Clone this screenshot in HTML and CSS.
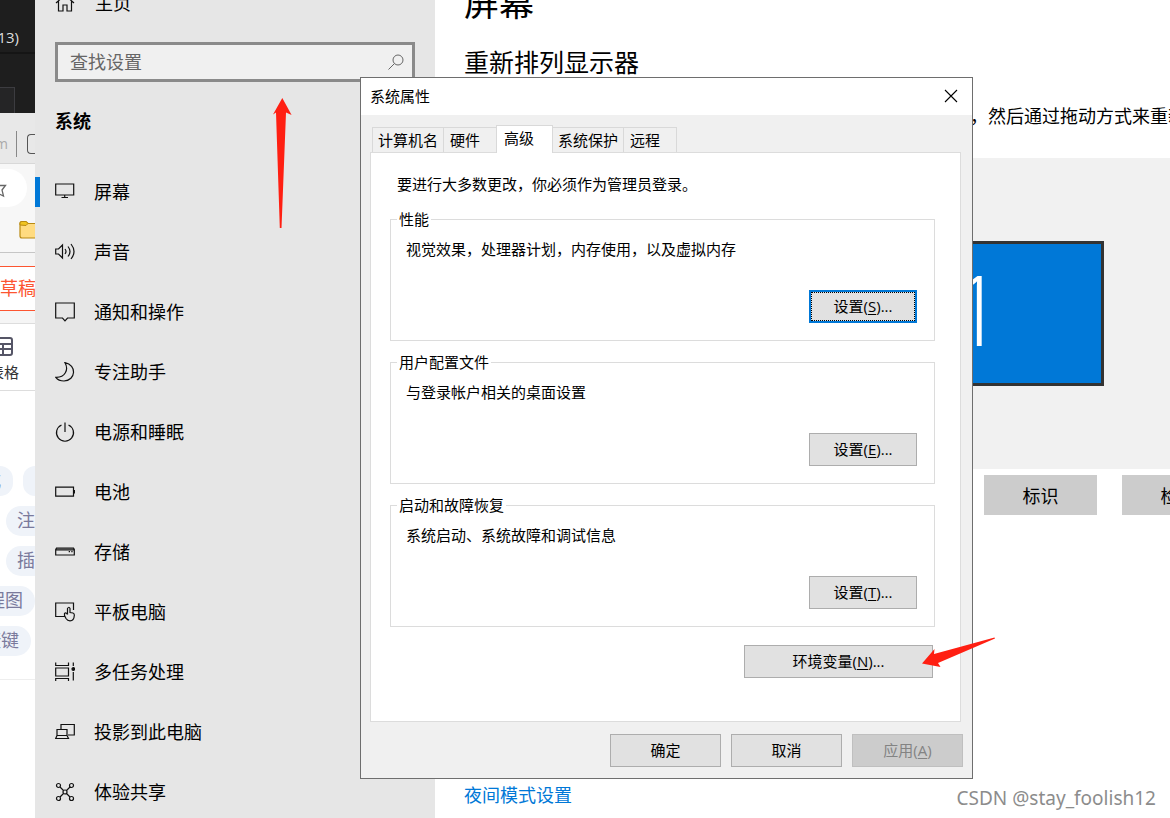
FILE: index.html
```html
<!DOCTYPE html>
<html lang="zh-CN">
<head>
<meta charset="utf-8">
<title>系统设置</title>
<link rel="stylesheet" href="styles.css">
</head>
<body>
<div class="desktop">
  <aside class="behind">
    <div class="behind-dark"><span class="behind-count">13)</span><div class="behind-tab"></div></div>
    <div class="behind-tabs"><span class="behind-url">m</span><span class="behind-rule"></span><span class="behind-page"></span></div>
    <div class="behind-toolbar">
      <div class="behind-address"><svg width="8" height="18" viewBox="0 0 8 18" fill="none" stroke="#666" stroke-width="1.3"><path d="M-2 3.500H5.500L2 8L3.500 14L-3 11"/></svg></div>
      <svg class="behind-folder" width="18" height="20" viewBox="0 0 18 20"><path d="M1 3Q1 1.500 3 1.500H7L9 3.500H20V18H3Q1 18 1 16Z" fill="#ffdb80" stroke="#b98a12" stroke-width="1.200"/><path d="M1 5V3Q1 1.500 3 1.500H7L9 3.500L7 5.500Z" fill="#f0c420" stroke="#b98a12"/></svg>
    </div>
    <div class="behind-draft"><span class="draft-label">草稿</span></div>
    <div class="behind-table"><svg width="14" height="20" viewBox="0 0 14 20" fill="none" stroke="#555566" stroke-width="2"><path d="M-4 1H10Q12 1 12 3V16Q12 18 10 18H-4M-2 7H12M-2 12H12M3 7V18"/></svg><span class="table-label">表格</span></div>
    <div class="behind-chips">
      <div class="chip-row"><span class="chip chip-cut">式</span><span class="chip chip-open"></span></div>
      <div class="chip-row chip-row-inset"><span class="chip chip-open">注</span></div>
      <div class="chip-row chip-row-inset"><span class="chip chip-open">插</span></div>
      <div class="chip-row"><span class="chip chip-wide">程图</span></div>
      <div class="chip-row"><span class="chip chip-mid">捷键</span></div>
    </div>
  </aside>

  <nav class="sidebar">
    <a class="home" href="#"><svg class="icon" viewBox="0 0 20 20"><path d="M1 10L10 2L19 10M3.500 8V18H8V12H12V18H16.500V8"/></svg>主页</a>
    <div class="search">
      <input class="search-input" type="text" placeholder="查找设置" aria-label="查找设置">
      <svg class="search-icon" viewBox="0 0 16 16"><circle cx="10" cy="6" r="5"/><path d="M6.500 9.500L.5 15.500"/></svg>
    </div>
    <h2 class="sidebar-title">系统</h2>
    <ul class="nav">
      <li><a class="nav-item nav-current" href="#"><svg class="icon" viewBox="0 0 20 20"><path d="M.7 2H18.700V13H.7ZM9.700 13V15.500M6.500 15.500H13"/></svg>屏幕</a></li>
      <li><a class="nav-item" href="#"><svg class="icon" viewBox="0 0 20 20"><path d="M.7 7H3.500L7.500 3V16L3.500 12H.7ZM10 7Q12 9.500 10 12M13 4.500Q17 9.500 13 14.500M16 2Q22 9.500 16 17"/></svg>声音</a></li>
      <li><a class="nav-item" href="#"><svg class="icon" viewBox="0 0 20 20"><path d="M.7 1H19.300V16H12.500L10 18.800L7.500 16H.7Z"/></svg>通知和操作</a></li>
      <li><a class="nav-item" href="#"><svg class="icon" viewBox="0 0 20 20"><path d="M10 .7C22 3 21 18.500 9 19C5.500 19 2.500 17.700 .8 15.400C10 15.700 14 7.700 10 .7Z"/></svg>专注助手</a></li>
      <li><a class="nav-item" href="#"><svg class="icon" viewBox="0 0 20 20"><path d="M10 .5V10M6.500 3A8.500 8.500 0 1 0 13.500 3"/></svg>电源和睡眠</a></li>
      <li><a class="nav-item" href="#"><svg class="icon" viewBox="0 0 20 20"><path d="M.7 5.200H18.500V14.200H.7Z"/><path d="M19.300 8V11.500" stroke-width="1.600"/></svg>电池</a></li>
      <li><a class="nav-item" href="#"><svg class="icon" viewBox="0 0 20 20"><path d="M.7 7.500L1.500 6.200H18.500L19.300 7.500V13H.7ZM.7 7.800H19.300M13.700 9.700H15M16.300 9.700H17.600"/></svg>存储</a></li>
      <li><a class="nav-item" href="#"><svg class="icon" viewBox="0 0 20 20"><path d="M9.500 14.500H.7V1H18.500V8M12.500 12.500V6.500Q14 4 15 6.500V10.500L18 11Q19.500 11.500 19.300 13.500Q19 18.800 15 18.800Q12.500 18.800 11 16.500L9.500 13.500V11.500Q11 10 12.500 12.500"/></svg>平板电脑</a></li>
      <li><a class="nav-item" href="#"><svg class="icon" viewBox="0 0 20 20"><path d="M.7 .5V3.500H13.500V.5M.7 6H13.500V14H.7ZM.7 19V16.500H13.500V19M18.300 .5V4M18.300 10V18.500"/><circle cx="18.300" cy="7" r="1.300" fill="#111"/></svg>多任务处理</a></li>
      <li><a class="nav-item" href="#"><svg class="icon" viewBox="0 0 20 20"><path d="M6 7.500V2.500H19.300V13H13M2 7.500H12V13.500H2ZM2 13.500L.7 16.500H13.500L12 13.500"/></svg>投影到此电脑</a></li>
      <li><a class="nav-item" href="#"><svg class="icon" viewBox="0 0 20 20"><circle cx="3.500" cy="3.500" r="2"/><circle cx="16.500" cy="3.500" r="2"/><circle cx="3.500" cy="16.500" r="2"/><circle cx="16.500" cy="16.500" r="2"/><circle cx="10" cy="10" r="2"/><path d="M5 5L8.500 8.500M15 5L11.500 8.500M5 15L8.500 11.500M15 15L11.500 11.500"/></svg>体验共享</a></li>
    </ul>
  </nav>

  <main class="content">
    <h1 class="page-title">屏幕</h1>
    <h2 class="section-title">重新排列显示器</h2>
    <p class="hint">，然后通过拖动方式来重新</p>
    <div class="arrange"><div class="monitor">1</div></div>
    <div class="actions"><button class="flat-button" type="button">标识</button><button class="flat-button" type="button">检测</button></div>
    <a class="night-link" href="#">夜间模式设置</a>
  </main>

  <section class="dialog" role="dialog" aria-labelledby="dialog-title">
    <header class="titlebar">
      <span id="dialog-title">系统属性</span>
      <button class="close" type="button" aria-label="关闭"><svg width="14" height="14" viewBox="0 0 14 14" stroke="#000" stroke-width="1.100"><path d="M1 1L13 13M13 1L1 13"/></svg></button>
    </header>
    <div class="dialog-body">
      <div class="tabs" role="tablist">
        <button class="tab" type="button" role="tab">计算机名</button>
        <button class="tab tab-roomy" type="button" role="tab">硬件</button>
        <button class="tab tab-active" type="button" role="tab" aria-selected="true">高级</button>
        <button class="tab" type="button" role="tab">系统保护</button>
        <button class="tab tab-roomy" type="button" role="tab">远程</button>
      </div>
      <div class="panel" role="tabpanel">
        <p class="panel-note">要进行大多数更改，你必须作为管理员登录。</p>
        <div class="groups">
          <fieldset class="group"><legend>性能</legend><p>视觉效果，处理器计划，内存使用，以及虚拟内存</p><button class="button button-focus" type="button">设置(<u>S</u>)...</button></fieldset>
          <fieldset class="group"><legend>用户配置文件</legend><p>与登录帐户相关的桌面设置</p><button class="button" type="button">设置(<u>E</u>)...</button></fieldset>
          <fieldset class="group"><legend>启动和故障恢复</legend><p>系统启动、系统故障和调试信息</p><button class="button" type="button">设置(<u>T</u>)...</button></fieldset>
        </div>
        <button class="button button-env" type="button">环境变量(<u>N</u>)...</button>
      </div>
      <footer class="dialog-footer">
        <button class="button" type="button">确定</button>
        <button class="button" type="button">取消</button>
        <button class="button" type="button" disabled>应用(<u>A</u>)</button>
      </footer>
    </div>
  </section>

  <svg class="arrow arrow-up" width="20" height="132" viewBox="0 0 20 132"><path d="M10.300 1L19.600 18L14 15.500L9.500 131H7.800L4 15.500L1 17.500Z"/></svg>
  <svg class="arrow arrow-left" width="76" height="32" viewBox="0 0 76 32"><path d="M1 26.500L13.500 12L13 17L73.500 .5L74 1.500L17 26L19.500 30Z"/></svg>
  <div class="watermark">CSDN @stay_foolish12</div>
</div>
</body>
</html>
```

FILE: styles.css
```css
* { box-sizing: border-box; }

body {
  margin: 0;
  background: #fff;
  color: #000;
  font: 18px/24px "Open Sans", "Noto Sans CJK SC", sans-serif;
}

button, input { font: inherit; color: inherit; }
p, h1, h2, ul { margin: 0; padding: 0; }
a { color: inherit; text-decoration: none; }

.desktop {
  position: relative;
  display: flex;
  height: 100vh;
  overflow: hidden;
}

/* Slice of the windows behind the settings app */
.behind {
  flex: 0 0 35px;
  overflow: hidden;
  white-space: nowrap;
}
.behind-dark {
  display: flex;
  flex-direction: column;
  justify-content: space-between;
  height: 113px;
  padding-top: 25px;
  background: #1e1e1e;
  color: #ddd;
  font-size: 15px;
}
.behind-count {
  display: flex;
  justify-content: flex-end;
  padding: 0 16px 3px 0;
  border-bottom: 2px solid #151515;
}
.behind-tab {
  width: 15px;
  height: 26px;
  background: #252526;
  border: solid #3c3c40;
  border-width: 1px 1px 0 0;
}
.behind-tabs {
  display: flex;
  align-items: center;
  height: 51px;
  padding-top: 12px;
  background: #e8e8e8;
  border-bottom: 1px solid #d8d8d8;
  color: #aaa;
  font-size: 14px;
}
.behind-url {
  display: flex;
  justify-content: flex-end;
  width: 8px;
  margin-right: 8px;
}
.behind-rule {
  width: 1px;
  height: 26px;
  margin-right: 10px;
  background: #888;
}
.behind-page {
  flex: 1;
  height: 20px;
  border: solid #555;
  border-width: 1px 0 1px 1px;
  border-radius: 4px 0 0 4px;
}
.behind-toolbar {
  display: flex;
  flex-direction: column;
  gap: 13px;
  height: 89px;
  padding-top: 5px;
  background: #f7f7f7;
  border-bottom: 1px solid #c6c6c6;
}
.behind-address {
  display: flex;
  align-items: center;
  width: 27px;
  height: 38px;
  padding-top: 6px;
  background: #fff;
  border-radius: 0 19px 19px 0;
}
.behind-folder { margin-left: 19px; }
.behind-draft {
  height: 71px;
  padding: 13px 0 12px;
  background: #f5f5f5;
  border-bottom: 1px solid #ddd;
}
.draft-label {
  display: flex;
  align-items: center;
  height: 45px;
  padding-bottom: 2px;
  background: #fff;
  border: solid #fc5531;
  border-width: 1px 0;
  color: #fc5531;
}
.behind-table {
  display: flex;
  flex-direction: column;
  gap: 3px;
  height: 67px;
  padding-top: 13px;
  border-bottom: 1px solid #ddd;
  font-size: 15px;
  color: #333;
}
.table-label {
  display: flex;
  justify-content: flex-end;
  width: 19px;
}
.behind-chips {
  display: flex;
  flex-direction: column;
  gap: 10px;
  padding: 75px 0 23px;
  border-bottom: 1px solid #eee;
  color: #7a7a9c;
}
.chip-row { display: flex; gap: 10px; }
.chip-row-inset { padding-left: 6px; }
.chip {
  display: flex;
  align-items: center;
  height: 30px;
  padding-bottom: 2px;
  background: #eff3f9;
}
.chip-open {
  flex: 1;
  padding-left: 11px;
  border-radius: 15px 0 0 15px;
}
.chip-cut, .chip-mid, .chip-wide {
  justify-content: flex-end;
  padding-right: 12px;
  border-radius: 0 15px 15px 0;
}
.chip-cut { width: 13px; }
.chip-mid { width: 31px; }
.chip-wide { width: 35px; }

/* Settings navigation */
.sidebar {
  flex: 0 0 400px;
  background: #e6e6e6;
}
.icon {
  flex: none;
  width: 20px;
  height: 20px;
  fill: none;
  stroke: #111;
  stroke-width: 1.2;
}
.home {
  display: flex;
  align-items: center;
  gap: 20px;
  height: 42px;
  padding: 0 20px 36px;
}
.search {
  position: relative;
  margin: 0 20px;
}
.search-input {
  display: block;
  width: 100%;
  height: 40px;
  padding: 0 40px 0 12px;
  background: #f0f0f0;
  border: 3px solid #8a8a8a;
  border-radius: 0;
}
.search-input::placeholder { color: #666; opacity: 1; }
.search-icon {
  position: absolute;
  top: 12px;
  right: 11px;
  width: 16px;
  height: 16px;
  fill: none;
  stroke: #666;
}
.sidebar-title {
  padding: 27px 20px 29px;
  font-size: 18px;
  line-height: 24px;
}
.nav { list-style: none; }
.nav-item {
  display: flex;
  align-items: center;
  gap: 19px;
  height: 60px;
  padding-left: 20px;
}
.nav-current {
  background: linear-gradient(#0078d7, #0078d7) no-repeat left center / 5px 30px;
}

/* Settings page */
.content {
  flex: 1;
  min-width: 0;
  overflow: hidden;
  padding-left: 29px;
  white-space: nowrap;
}
.page-title {
  margin-top: -22px;
  font-size: 35px;
  font-weight: 400;
  line-height: 50px;
}
.section-title {
  margin-top: 18px;
  font-size: 25px;
  font-weight: 400;
  line-height: 32px;
}
.hint {
  margin-top: 26px;
  padding-left: 506px;
}
.arrange {
  display: flex;
  align-items: center;
  height: 311px;
  margin-top: 30px;
  padding-left: 386px;
  background: #f1f1f1;
}
.monitor {
  width: 254px;
  height: 145px;
  background: #0078d7;
  border: 3px solid #333;
  color: #fff;
  font-size: 98px;
  font-weight: 300;
  line-height: 128px;
  text-align: center;
}
.actions {
  display: flex;
  gap: 25px;
  padding: 6px 0 0 520px;
}
.flat-button {
  flex: none;
  width: 113px;
  height: 40px;
  padding: 2px 0 0;
  background: #ccc;
  border: 0;
}
.night-link {
  display: block;
  margin-top: 268px;
  color: #0078d7;
}

/* System properties window */
.dialog {
  position: absolute;
  left: 360px;
  top: 77px;
  width: 613px;
  background: #f0f0f0;
  border: 1px solid #6e6e6e;
  font-size: 15px;
  line-height: 20px;
}
.titlebar {
  display: flex;
  align-items: center;
  justify-content: space-between;
  height: 37px;
  padding: 0 14px 2px 9px;
  background: #fff;
}
.close {
  display: flex;
  padding: 0;
  background: none;
  border: 0;
}
.dialog-body { padding: 10px 9px 11px; }
.tabs {
  display: flex;
  align-items: flex-end;
  padding-left: 2px;
}
.tab {
  height: 25px;
  margin-right: -1px;
  padding: 0 5px;
  background: #f0f0f0;
  border: 1px solid #d9d9d9;
  border-bottom: 0;
}
.tab-roomy { padding: 0 16px 0 6px; }
.tab-active {
  height: 28px;
  margin-bottom: -1px;
  padding: 0 18px 4px 7px;
  background: #fff;
}
.panel {
  display: flex;
  flex-direction: column;
  margin-right: 2px;
  padding: 21px 25px 43px 19px;
  background: #fff;
  border: 1px solid #dcdcdc;
}
.panel-note { padding-left: 7px; }
.groups {
  display: flex;
  flex-direction: column;
  gap: 11px;
  margin-top: 15px;
}
.group {
  min-width: 0;
  margin: 0;
  padding: 10px 17px 17px 6px;
  border: 1px solid #dcdcdc;
}
.group legend { padding: 0 2px; }
.group p { padding-left: 9px; }
.group .button {
  display: block;
  width: 108px;
  margin: 31px 0 0 auto;
}
.button {
  width: 111px;
  height: 33px;
  padding: 0 0 2px;
  background: #e1e1e1;
  border: 1px solid #adadad;
}
.button:disabled {
  background: #ccc;
  border-color: #bfbfbf;
  color: #838383;
}
.button u { text-underline-offset: 2px; }
.button-focus {
  border: 2px solid #0078d7;
  outline: 1px dotted #000;
  outline-offset: -3px;
}
.button-env {
  align-self: flex-end;
  width: 189px;
  margin: 18px 2px 0 0;
}
.dialog-footer {
  display: flex;
  justify-content: flex-end;
  gap: 10px;
  margin-top: 12px;
}

/* Annotations */
.arrow { position: absolute; fill: #ff1f12; }
.arrow-up { left: 272px; top: 97px; }
.arrow-left { left: 921px; top: 637px; }
.watermark {
  position: absolute;
  right: 14px;
  bottom: 8px;
  color: #8c8c8c;
  font-family: "Noto Sans", sans-serif;
  font-size: 19px;
  text-shadow: 1px 1px 0 #fff;
}
```
